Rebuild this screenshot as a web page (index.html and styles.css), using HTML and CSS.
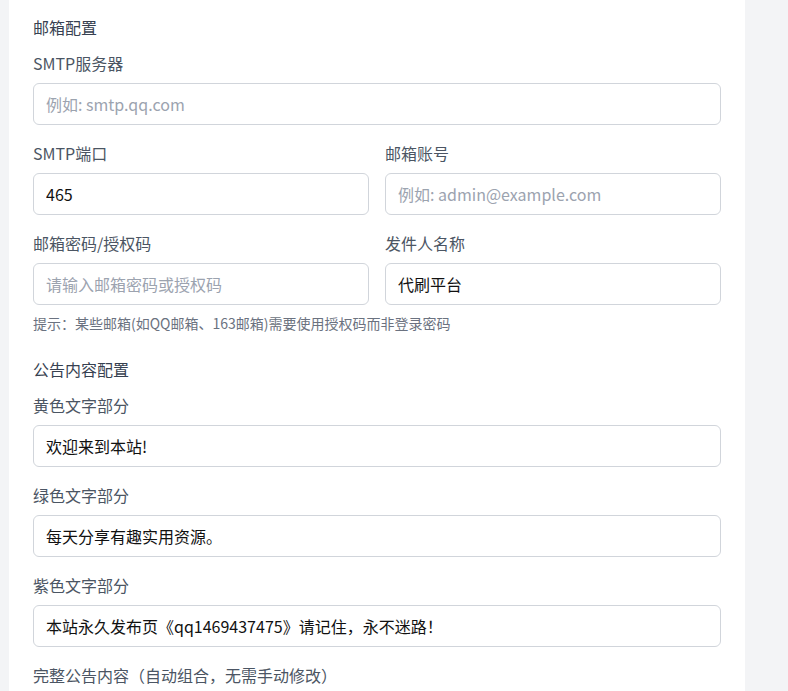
FILE: index.html
```html
<!DOCTYPE html>
<html lang="zh-CN">
<head>
<meta charset="utf-8">
<title>邮箱配置</title>
<link rel="stylesheet" href="styles.css">
</head>
<body>
<div class="page">
  <div class="card">
    <section class="section">
      <h3 class="section-title">邮箱配置</h3>
      <div class="field">
        <label class="label">SMTP服务器</label>
        <input class="input" type="text" placeholder="例如: smtp.qq.com">
      </div>
      <div class="row">
        <div class="col">
          <label class="label">SMTP端口</label>
          <input class="input" type="text" value="465">
        </div>
        <div class="col">
          <label class="label">邮箱账号</label>
          <input class="input" type="text" placeholder="例如: admin@example.com">
        </div>
      </div>
      <div class="row row-tight">
        <div class="col">
          <label class="label">邮箱密码/授权码</label>
          <input class="input" type="password" placeholder="请输入邮箱密码或授权码">
        </div>
        <div class="col">
          <label class="label">发件人名称</label>
          <input class="input" type="text" value="代刷平台">
        </div>
      </div>
      <p class="hint">提示：某些邮箱(如QQ邮箱、163邮箱)需要使用授权码而非登录密码</p>
    </section>
    <section class="section">
      <h3 class="section-title">公告内容配置</h3>
      <div class="field">
        <label class="label">黄色文字部分</label>
        <input class="input" type="text" value="欢迎来到本站!">
      </div>
      <div class="field">
        <label class="label">绿色文字部分</label>
        <input class="input" type="text" value="每天分享有趣实用资源。">
      </div>
      <div class="field">
        <label class="label">紫色文字部分</label>
        <input class="input" type="text" value="本站永久发布页《qq1469437475》请记住，永不迷路！">
      </div>
      <div class="field">
        <label class="label">完整公告内容（自动组合，无需手动修改）</label>
      </div>
    </section>
  </div>
</div>
</body>
</html>
```

FILE: styles.css
```css
* { box-sizing: border-box; }
html, body {
  margin: 0;
  padding: 0;
  background: #f3f4f6;
  font-family: "Microsoft YaHei", "Noto Sans CJK SC", "Noto Sans", sans-serif;
}
.page {
  padding: 0 43px 0 9px;
}
.card {
  background: #ffffff;
  padding: 15px 24px 24px 24px;
  min-height: 720px;
}
.section-title {
  margin: 0 0 12px 0;
  font-size: 16px;
  line-height: 24px;
  font-weight: 400;
  color: #374151;
}
.field {
  margin-bottom: 16px;
}
.label {
  display: block;
  font-size: 16px;
  line-height: 24px;
  color: #4b5563;
  margin-bottom: 8px;
}
.input {
  display: block;
  width: 100%;
  height: 42px;
  padding: 0 12px;
  border: 1px solid #d1d5db;
  border-radius: 6px;
  background: #ffffff;
  font-family: inherit;
  font-size: 16px;
  color: #111111;
  outline: none;
}
.input::placeholder {
  color: #9ca3af;
}
.row {
  display: grid;
  grid-template-columns: 1fr 1fr;
  column-gap: 16px;
  margin-bottom: 16px;
}
.row-tight {
  margin-bottom: 8px;
}
.hint {
  margin: 0 0 24px 0;
  font-size: 14px;
  line-height: 20px;
  color: #6b7280;
}
```
